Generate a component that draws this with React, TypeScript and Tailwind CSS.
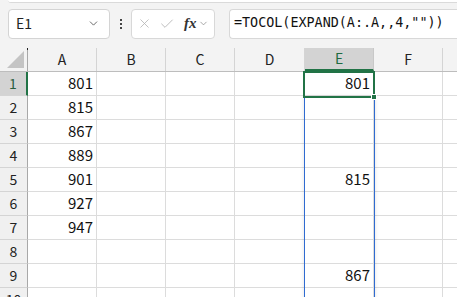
import { ChevronDown, X, Check } from 'lucide-react';

const cols = [
  { key: 'A', w: 'w-[69px]' },
  { key: 'B', w: 'w-[69px]' },
  { key: 'C', w: 'w-[69px]' },
  { key: 'D', w: 'w-[70px]' },
  { key: 'E', w: 'w-[69px]' },
  { key: 'F', w: 'w-[69px]' },
];

const colA: Record<number, string> = { 1: '801', 2: '815', 3: '867', 4: '889', 5: '901', 6: '927', 7: '947' };
const colE: Record<number, string> = { 1: '801', 5: '815', 9: '867' };

const rows = [1, 2, 3, 4, 5, 6, 7, 8, 9, 10];

const font = { fontFamily: '"Noto Sans CJK JP", "Noto Sans", sans-serif' };

const App = () => {
  return (
    <div className="relative w-[457px] h-[297px] overflow-hidden bg-[#f3f3f3]" style={font}>
      {/* ribbon edge */}
      <div className="ml-[8px] h-[3px] bg-white border-b border-[#dadada] rounded-bl-[6px]" />

      {/* formula bar */}
      <div className="flex items-center h-[45px] pt-[4px] pb-[8px]">
        <div className="ml-[8px] w-[102px] h-[30px] flex items-center justify-between bg-white border border-[#d4d4d4] rounded-[4px] pl-[7px] pr-[9px]">
          <span className="text-[14px] text-[#222]">E1</span>
          <ChevronDown size={13} strokeWidth={1.6} className="text-[#555]" />
        </div>
        <div className="w-[21px] flex flex-col items-center gap-[2px]">
          <div className="w-[2px] h-[2px] bg-[#444]" />
          <div className="w-[2px] h-[2px] bg-[#444]" />
          <div className="w-[2px] h-[2px] bg-[#444]" />
        </div>
        <div className="w-[84px] h-[30px] flex items-center bg-white border border-[#d8d8d8] rounded-[4px] pl-[5px]">
          <X size={15} strokeWidth={1.3} className="text-[#b4b4b4]" />
          <Check size={16} strokeWidth={1.3} className="ml-[7px] text-[#b4b4b4]" />
          <span className="ml-[9px] text-[15px] font-bold italic text-[#333]" style={{ fontFamily: '"Liberation Serif", serif' }}>fx</span>
          <ChevronDown size={11} strokeWidth={1.6} className="ml-[1px] text-[#888]" />
        </div>
        <div className="ml-[14px] flex-1 h-[30px] flex items-center bg-white border border-[#d8d8d8] border-r-0 rounded-l-[4px] pl-[4px]">
          <span className="text-[13.4px] text-[#111]" style={{ fontFamily: '"DejaVu Sans Mono", monospace' }}>=TOCOL(EXPAND(A:.A,,4,""))</span>
        </div>
      </div>

      {/* column headers */}
      <div className="flex h-[24px] border-b border-[#bdbdbd]">
        <div className="relative w-[28px] border-r border-[#a8a8a8]">
          <div className="absolute right-[3px] bottom-[3px] w-0 h-0 border-l-[17px] border-l-transparent border-b-[17px] border-b-[#c4c4c4]" />
          <div className="absolute right-[-1px] top-0 w-[1px] h-[2px] bg-[#222]" />
        </div>
        {cols.map(c => (
          <div
            key={c.key}
            className={`${c.w} flex items-center justify-center text-[14px] border-r ${
              c.key === 'E'
                ? 'bg-[#d3d3d3] text-[#1e6b41] border-[#c8c8c8] border-b-2 border-b-[#217346]'
                : 'text-[#222] border-[#d4d4d4]'
            }`}
          >
            {c.key}
          </div>
        ))}
        <div className="flex-1" />
      </div>

      {/* rows */}
      {rows.map(r => (
        <div key={r} className="flex h-[24px]">
          <div
            className={`w-[28px] flex items-center justify-center text-[14px] border-b border-[#d4d4d4] ${
              r === 1
                ? 'bg-[#d3d3d3] text-[#2a5e3e] border-r-2 border-r-[#217346]'
                : 'bg-[#f0f0f0] text-[#222] border-r border-r-[#a8a8a8]'
            }`}
          >
            {r}
          </div>
          {cols.map(c => (
            <div
              key={c.key}
              className={`${c.w} flex items-center justify-end pr-[3px] text-[15px] text-[#111] bg-white border-r border-b border-[#dcdcdc]`}
            >
              {c.key === 'A' ? colA[r] : c.key === 'E' ? colE[r] : ''}
            </div>
          ))}
          <div className="flex-1 bg-white border-b border-[#dcdcdc]" />
        </div>
      ))}

      {/* spill range */}
      <div className="absolute left-[304px] top-[97px] w-[71px] h-[210px] border-x border-[#2f6bd1] shadow-[0_0_4px_rgba(0,0,0,0.12)]" />

      {/* active cell */}
      <div className="absolute left-[303px] top-[71px] w-[72px] h-[27px] border-2 border-[#217346]" />
      <div className="absolute left-[371px] top-[94px] w-[6px] h-[6px] bg-[#217346] border border-white" />
    </div>
  );
};

export default App;
